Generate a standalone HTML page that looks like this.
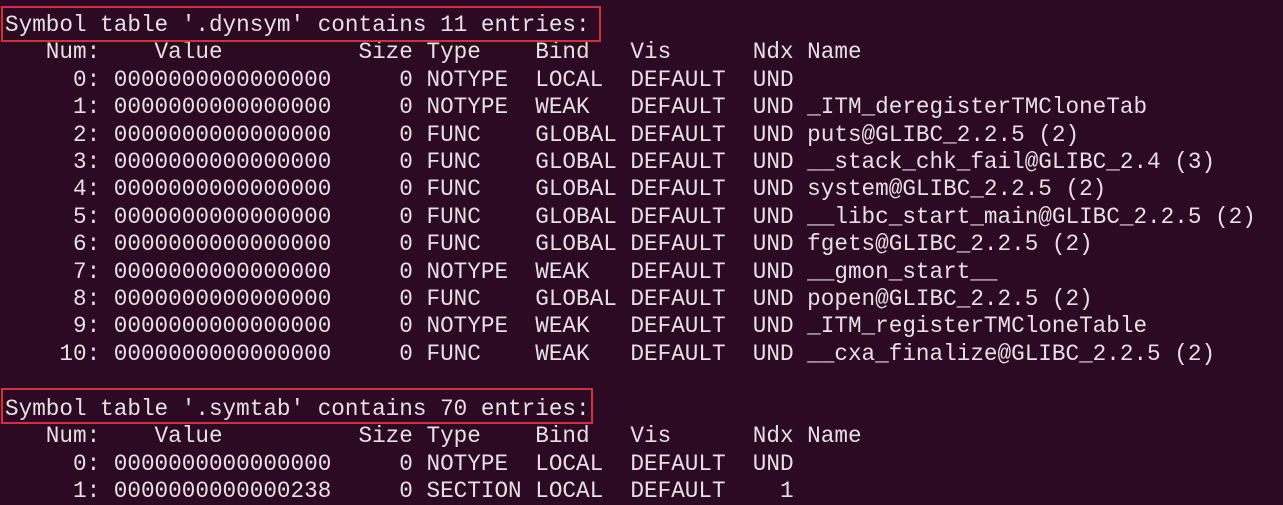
<!DOCTYPE html>
<html><head><meta charset="utf-8"><style>
html,body{margin:0;padding:0;}
body{width:1283px;height:485px;overflow:hidden;background:#2d0a23;position:relative;}
pre{margin:0;position:absolute;left:5px;top:12px;font-family:"Liberation Mono","DejaVu Sans Mono",monospace;font-size:22.67px;line-height:27.4px;color:#e6dfe3;white-space:pre;}
.box{position:absolute;border:2px solid #d0323a;box-sizing:border-box;}
</style></head><body>
<pre>Symbol table '.dynsym' contains 11 entries:
   Num:    Value          Size Type    Bind   Vis      Ndx Name
     0: 0000000000000000     0 NOTYPE  LOCAL  DEFAULT  UND 
     1: 0000000000000000     0 NOTYPE  WEAK   DEFAULT  UND _ITM_deregisterTMCloneTab
     2: 0000000000000000     0 FUNC    GLOBAL DEFAULT  UND puts@GLIBC_2.2.5 (2)
     3: 0000000000000000     0 FUNC    GLOBAL DEFAULT  UND __stack_chk_fail@GLIBC_2.4 (3)
     4: 0000000000000000     0 FUNC    GLOBAL DEFAULT  UND system@GLIBC_2.2.5 (2)
     5: 0000000000000000     0 FUNC    GLOBAL DEFAULT  UND __libc_start_main@GLIBC_2.2.5 (2)
     6: 0000000000000000     0 FUNC    GLOBAL DEFAULT  UND fgets@GLIBC_2.2.5 (2)
     7: 0000000000000000     0 NOTYPE  WEAK   DEFAULT  UND __gmon_start__
     8: 0000000000000000     0 FUNC    GLOBAL DEFAULT  UND popen@GLIBC_2.2.5 (2)
     9: 0000000000000000     0 NOTYPE  WEAK   DEFAULT  UND _ITM_registerTMCloneTable
    10: 0000000000000000     0 FUNC    WEAK   DEFAULT  UND __cxa_finalize@GLIBC_2.2.5 (2)

Symbol table '.symtab' contains 70 entries:
   Num:    Value          Size Type    Bind   Vis      Ndx Name
     0: 0000000000000000     0 NOTYPE  LOCAL  DEFAULT  UND 
     1: 0000000000000238     0 SECTION LOCAL  DEFAULT    1 </pre>
<div class="box" style="left:1px;top:6px;width:600px;height:36px;"></div>
<div class="box" style="left:1px;top:388px;width:592px;height:36px;"></div>
</body></html>
